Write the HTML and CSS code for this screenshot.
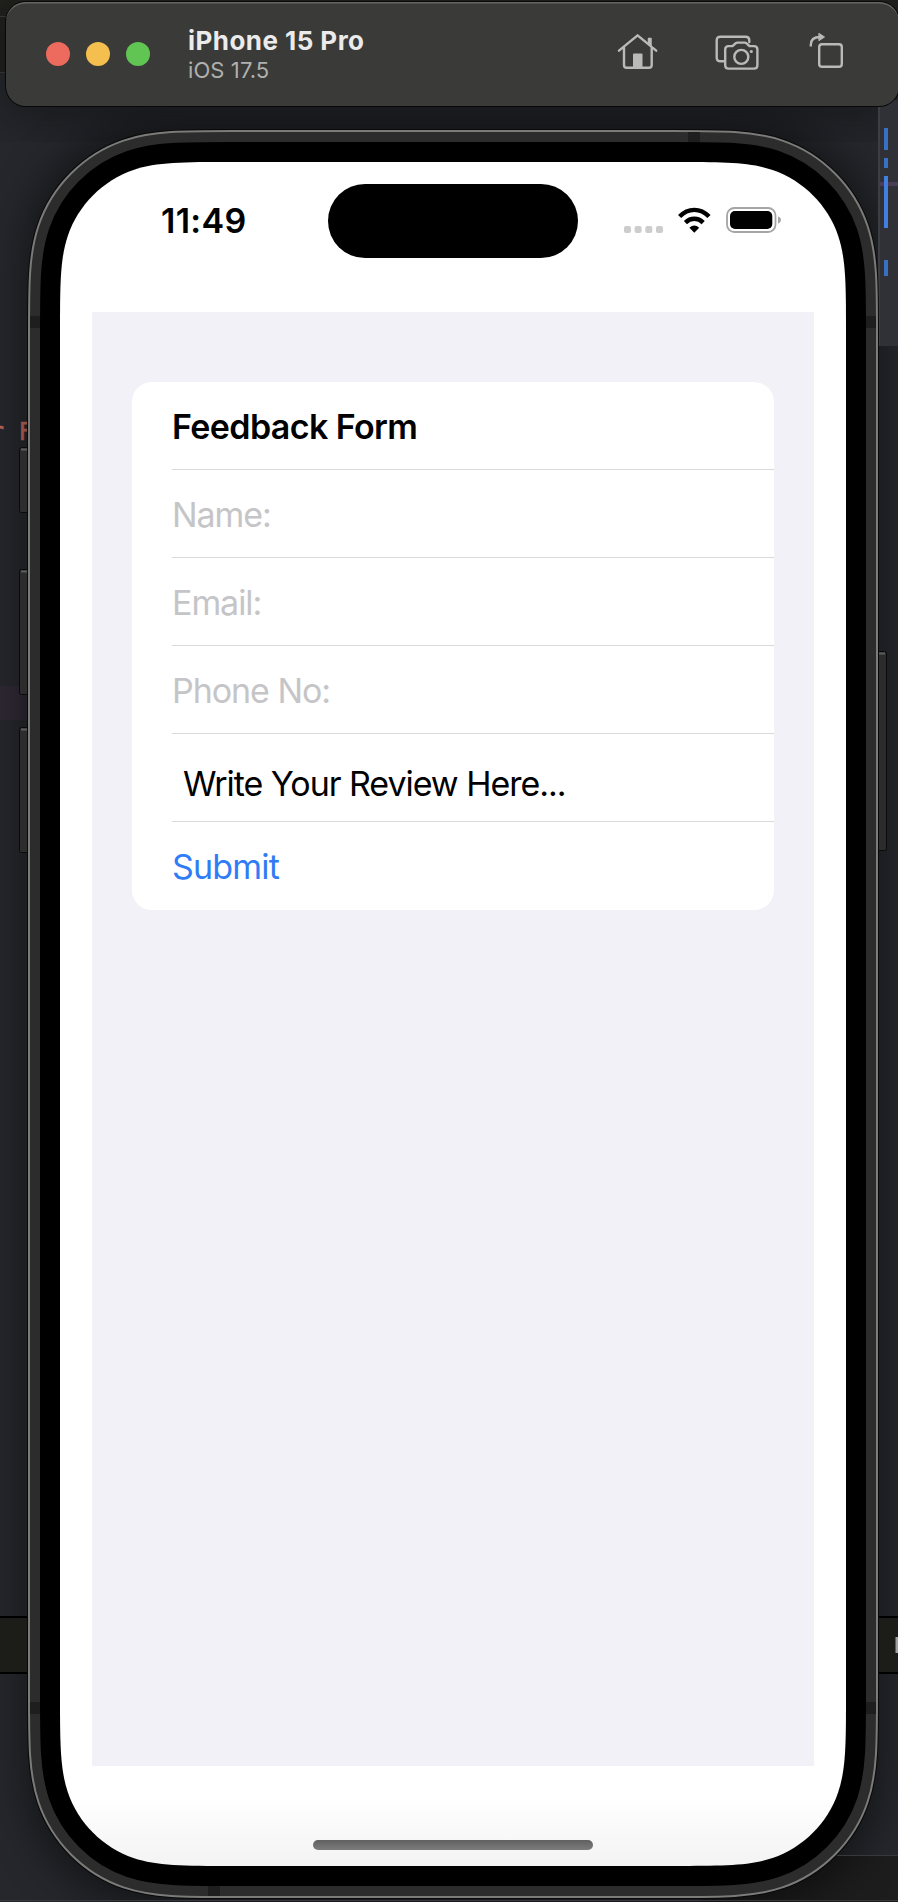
FILE: index.html
```html
<!DOCTYPE html>
<html lang="en">
<head>
<meta charset="utf-8">
<title>iPhone 15 Pro</title>
<link rel="stylesheet" href="styles.css">
</head>
<body>
<div class="desktop">
  <!-- editor windows behind the simulator, and the device shell -->
  <svg class="backdrop" width="898" height="1902" viewBox="0 0 898 1902" aria-hidden="true">
    <defs>
      <filter id="soft" x="-20%" y="-20%" width="140%" height="140%"><feGaussianBlur stdDeviation="24"/></filter>
      <linearGradient id="fade" x1="0" y1="0" x2="0" y2="1">
        <stop offset=".96" stop-color="#fff"/><stop offset="1" stop-color="#f3f3f3"/>
      </linearGradient>
      <path id="glass" d="M232.7 162H673.3C723 162 749.2 162 772.55 169.93C803.06 180.3 827.7 204.94 838.07 235.45C846 258.8 846 285 846 334.7V1693.3C846 1743 846 1769.2 838.07 1792.55C827.7 1823.06 803.06 1847.7 772.55 1858.07C749.2 1866 723 1866 673.3 1866H232.7C183 1866 156.8 1866 133.45 1858.07C102.94 1847.7 78.3 1823.06 67.93 1792.55C60 1769.2 60 1743 60 1693.3V334.7C60 285 60 258.8 67.93 235.45C78.3 204.94 102.94 180.3 133.45 169.93C156.8 162 183 162 232.7 162Z"/>
    </defs>
    <rect width="898" height="1902" fill="#25272c"/>
    <rect width="898" height="72" fill="#20201d"/>
    <path d="M0 16.5H898M0 72.5H898" stroke="#3a3a38"/>
    <rect y="686" width="40" height="34" fill="#2e2833"/>
    <rect x="700" y="1856" width="198" height="46" fill="#1d1d1d"/>
    <text class="code" x="-10.5" y="440" xml:space="preserve">r F</text>
    <rect x="30" y="128" width="846" height="1776" rx="130" fill="#000" opacity=".55" filter="url(#soft)"/>
    <rect x="6" y="10" width="892" height="110" fill="#000" opacity=".35" filter="url(#soft)"/>
    <rect x="878" y="100" width="20" height="246" fill="#303137"/>
    <path d="M879 100V346" stroke="#3d3e43" stroke-width="2"/>
    <rect x="880" y="182" width="18" height="4" fill="#4a3d58"/>
    <path d="M886 128V150M886 158V168M886 260V276" stroke="#3a70c4" stroke-width="4"/>
    <path d="M886 176V228" stroke="#427fe0" stroke-width="4"/>
    <rect y="1616" width="898" height="58" fill="#1c1c19"/>
    <path d="M0 1617H898M0 1673H898" stroke="#000" stroke-width="2"/>
    <rect x="895.5" y="1637" width="3" height="16" fill="#a0a0a0"/>
    <path d="M830 1855.5H898M0 1900.5H898" stroke="#38373c"/>
    <g fill="#2c2c2c" stroke="#0a0a0b">
      <rect x="19.5" y="447.500" width="14" height="65" rx="2"/>
      <rect x="19.5" y="569.500" width="14" height="125" rx="2"/>
      <rect x="19.5" y="727.500" width="14" height="125" rx="2"/>
      <rect x="872" y="651.500" width="14.500" height="199" rx="2"/>
    </g>
    <path d="M21 449.500H28M21 571.500H28M21 729.500H28M878 653.500H885" stroke="#5c5c5c" stroke-width="2"/>
    <g fill="none">
      <use href="#glass" stroke="#090909" stroke-width="66"/>
      <use href="#glass" stroke="#7b7b7a" stroke-width="64"/>
      <use href="#glass" stroke="#2c2c2c" stroke-width="60"/>
    </g>
    <path d="M30 316H42V328H30ZM864 316H876V328H864ZM30 1702H42V1714H30ZM864 1702H876V1714H864ZM688 132H700V144H688ZM208 1884H220V1896H208Z" fill="#1e1e1e"/>
    <use href="#glass" fill="none" stroke="#000" stroke-width="40"/>
    <use href="#glass" fill="url(#fade)"/>
  </svg>

  <header class="titlebar">
    <div class="lights"><i class="light close"></i><i class="light minimize"></i><i class="light full"></i></div>
    <div class="titles">
      <div class="title">iPhone 15 Pro</div>
      <div class="subtitle">iOS 17.5</div>
    </div>
    <svg class="tools" width="230" height="42" viewBox="0 0 230 42" fill="none" stroke="#bababa" stroke-width="2.400" stroke-linecap="round" stroke-linejoin="round">
      <path d="M2 17.700L20.600 2.300L39.200 17.700M7 14V32Q7 34.700 9.700 34.700H32Q34.700 34.700 34.700 32V14"/>
      <path d="M31.500 5.500H34V12.500L31.500 10.500Z" fill="#bababa" stroke-width="1.500"/>
      <path d="M16 21.500Q16 20.500 17 20.500H24.500Q25.500 20.500 25.500 21.500V34H16Z" fill="#bababa" stroke="none"/>
      <path d="M106.500 28.200H103.500Q99.700 28.200 99.700 24.400V7.500Q99.700 3.700 103.500 3.700H128.500Q132.300 3.700 132.300 7.500V9"/>
      <path d="M111.600 13.100H115.500L118.500 10.300Q119.300 9.600 120.500 9.600H127.600Q128.800 9.600 129.600 10.300L132.500 13.100H137Q140.400 13.100 140.400 16.500V32.200Q140.400 35.600 137 35.600H111.600Q108.200 35.600 108.200 32.200V16.500Q108.200 13.100 111.600 13.100Z"/>
      <circle cx="124.300" cy="23.900" r="7"/><circle cx="134.300" cy="18.500" r="1.600" fill="#bababa" stroke="none"/>
      <rect x="202.200" y="11.200" width="22.600" height="22.600" rx="2.800"/>
      <path d="M193.800 13.600V12Q193.800 4 203 4" stroke-linecap="butt"/><path d="M202.200 .5L207.500 4L202.200 7.500Z" fill="#bababa" stroke-width="1"/>
    </svg>
  </header>

  <main class="screen">
    <div class="status">
      <div class="time">11:49</div>
      <div class="island"></div>
      <svg class="indicators" width="160" height="30" viewBox="622 205 160 30" fill="none">
        <g fill="#cdcdcd"><rect x="624" y="226" width="7" height="7" rx="2"/><rect x="634.600" y="226" width="7" height="7" rx="2"/><rect x="645.300" y="226" width="7" height="7" rx="2"/><rect x="656" y="226" width="7" height="7" rx="2"/></g>
        <path d="M679.600 216.600Q686 209.900 694.300 209.900T709 216.600M685.400 222.600Q689.300 218.800 694.300 218.800T703.200 222.600" stroke="#000" stroke-width="4.400"/>
        <path d="M694.300 232.800L689.400 227.700Q694.300 223.500 699.200 227.700Z" fill="#000"/>
        <rect x="727" y="208" width="48.500" height="24" rx="7.500" stroke="#a5a5a5" stroke-width="1.800"/>
        <rect x="730" y="211" width="42.300" height="18" rx="5" fill="#000"/>
        <path d="M778 216.500Q781 217.500 781 220T778 223.800Z" fill="#a5a5a5"/>
      </svg>
    </div>
    <div class="form">
      <div class="card">
        <div class="row heading">Feedback Form</div>
        <div class="row field">Name:</div>
        <div class="row field">Email:</div>
        <div class="row field">Phone No:</div>
        <div class="row review">Write Your Review Here...</div>
        <div class="row submit">Submit</div>
      </div>
    </div>
    <div class="home-indicator"></div>
  </main>
</div>
</body>
</html>
```
FILE: styles.css
```css
* { box-sizing: border-box; }
body { margin: 0; background: #202126; font-family: Inter, "Liberation Sans", sans-serif; }
.desktop { position: relative; width: 898px; height: 1902px; overflow: hidden; }
.backdrop { position: absolute; inset: 0; display: block; }
.code { font: 24px "DejaVu Sans Mono", monospace; fill: #bf6659; stroke: #bf6659; stroke-width: 0.6px; }

.titlebar {
  position: relative;
  display: flex;
  align-items: flex-start;
  width: 893px;
  height: 104px;
  margin: 2px 0 0 6px;
  border-radius: 20px;
  background: #3a3a38;
  box-shadow: inset 0 2px 0 -0.5px #646462, 0 0 0 1px #080808;
}
.lights { display: flex; gap: 16px; padding: 40px 0 0 40px; }
.light { width: 24px; height: 24px; border-radius: 50%; }
.close { background: #ed6a5e; }
.minimize { background: #f5bf4f; }
.full { background: #61c554; }
.titles { width: 250px; padding: 23px 0 0 38px; white-space: nowrap; }
.title { font-size: 26px; font-weight: 700; line-height: 32px; color: #ebebeb; letter-spacing: 0.45px; }
.subtitle { font-size: 22px; line-height: 27px; color: #b0b0af; letter-spacing: 0.1px; }
.tools { margin: 31px 0 0 217px; }

.screen {
  position: relative;
  display: flex;
  flex-direction: column;
  width: 786px;
  height: 1704px;
  margin: 56px 0 0 60px;
}
.status { display: flex; height: 150px; align-items: flex-start; }
.time { width: 268px; padding: 37px 0 0 101px; font-size: 34px; font-weight: 600; line-height: 44px; letter-spacing: 0.3px; }
.island { width: 250px; height: 74px; margin-top: 22px; border-radius: 37px; background: #000; }
.indicators { margin: 43px 0 0 44px; }
.form { height: 1454px; margin: 0 32px; padding: 70px 40px; background: #f2f1f7; }
.card { height: 528px; border-radius: 20px; background: #fff; overflow: hidden; }
.row { display: flex; align-items: center; height: 88px; margin-left: 40px; padding-top: 2px; font-size: 34px; line-height: 44px; border-bottom: 1px solid #d9d9db; white-space: nowrap; color: #000; }
.heading { font-weight: 600; letter-spacing: -0.6px; }
.field { color: #c5c5c7; letter-spacing: -1.05px; }
.review { padding: 13px 0 0 11px; letter-spacing: -1.04px; }
.submit { color: #2f7cf6; letter-spacing: -0.8px; border-bottom: 0; }
.home-indicator { width: 280px; height: 10px; margin: 74px 0 0 253px; border-radius: 5px; background: linear-gradient(#606060, #7c7c7c); }
```
